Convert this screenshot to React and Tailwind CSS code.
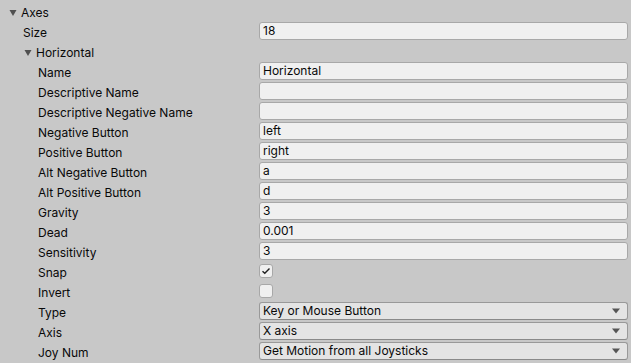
import React from "react";

const Arrow = () => (
  <svg width="10" height="8" viewBox="0 0 10 8" className="shrink-0">
    <path d="M1.5 1 L8.5 1 L5 7 Z" fill="#505050" />
  </svg>
);

const Field = ({ value }) => (
  <div className="h-[18px] flex-1 rounded-[3px] border border-[#a8a8a8] bg-[#f0f0f0] pl-[3px] leading-[16px] text-[12px] text-[#090909]">
    {value}
  </div>
);

const Check = ({ checked }) => (
  <div className="flex h-[14px] w-[14px] items-center justify-center rounded-[3px] border border-[#a8a8a8] bg-[#f0f0f0]">
    {checked && (
      <svg width="10" height="8" viewBox="0 0 10 8">
        <path d="M1.5 4.2 L3.8 6.3 L8.5 1.5" fill="none" stroke="#202020" strokeWidth="1.4" />
      </svg>
    )}
  </div>
);

const Select = ({ value }) => (
  <div className="flex h-[18px] flex-1 items-center justify-between rounded-[3px] border border-[#999999] border-b-[#8a8a8a] bg-[#e4e4e4] pl-[3px] pr-[7px] text-[12px] text-[#090909]">
    <span className="leading-[16px]">{value}</span>
    <svg width="8" height="6" viewBox="0 0 8 6">
      <path d="M0 0.5 L8 0.5 L4 5.5 Z" fill="#555555" />
    </svg>
  </div>
);

const rows = [
  ["Name", "field", "Horizontal"],
  ["Descriptive Name", "field", ""],
  ["Descriptive Negative Name", "field", ""],
  ["Negative Button", "field", "left"],
  ["Positive Button", "field", "right"],
  ["Alt Negative Button", "field", "a"],
  ["Alt Positive Button", "field", "d"],
  ["Gravity", "field", "3"],
  ["Dead", "field", "0.001"],
  ["Sensitivity", "field", "3"],
  ["Snap", "check", true],
  ["Invert", "check", false],
  ["Type", "select", "Key or Mouse Button"],
  ["Axis", "select", "X axis"],
  ["Joy Num", "select", "Get Motion from all Joysticks"],
];

const Row = ({ children, label, indent }) => (
  <div className="flex h-[20px] items-center pr-[3px]">
    <div className={`w-[259px] shrink-0 pt-[4px] leading-[14px] ${indent}`}>{label}</div>
    {children}
  </div>
);

const Header = ({ label, indent }) => (
  <div className={`flex h-[20px] items-center gap-[3px] pt-[4px] ${indent}`}>
    <Arrow />
    <span className="leading-[14px]">{label}</span>
  </div>
);

export default function App() {
  return (
    <div
      className="h-[363px] w-[631px] overflow-hidden bg-[#c8c8c8] pt-[1px] text-[12px] text-[#090909]"
      style={{ fontFamily: "Inter, 'Noto Sans', sans-serif" }}
    >
      <Header label="Axes" indent="pl-[8px]" />
      <Row label="Size" indent="pl-[23px]">
        <Field value="18" />
      </Row>
      <Header label="Horizontal" indent="pl-[23px]" />
      {rows.map(([label, kind, value]) => (
        <Row key={label} label={label} indent="pl-[38px]">
          {kind === "field" && <Field value={value} />}
          {kind === "check" && <Check checked={value} />}
          {kind === "select" && <Select value={value} />}
        </Row>
      ))}
    </div>
  );
}
